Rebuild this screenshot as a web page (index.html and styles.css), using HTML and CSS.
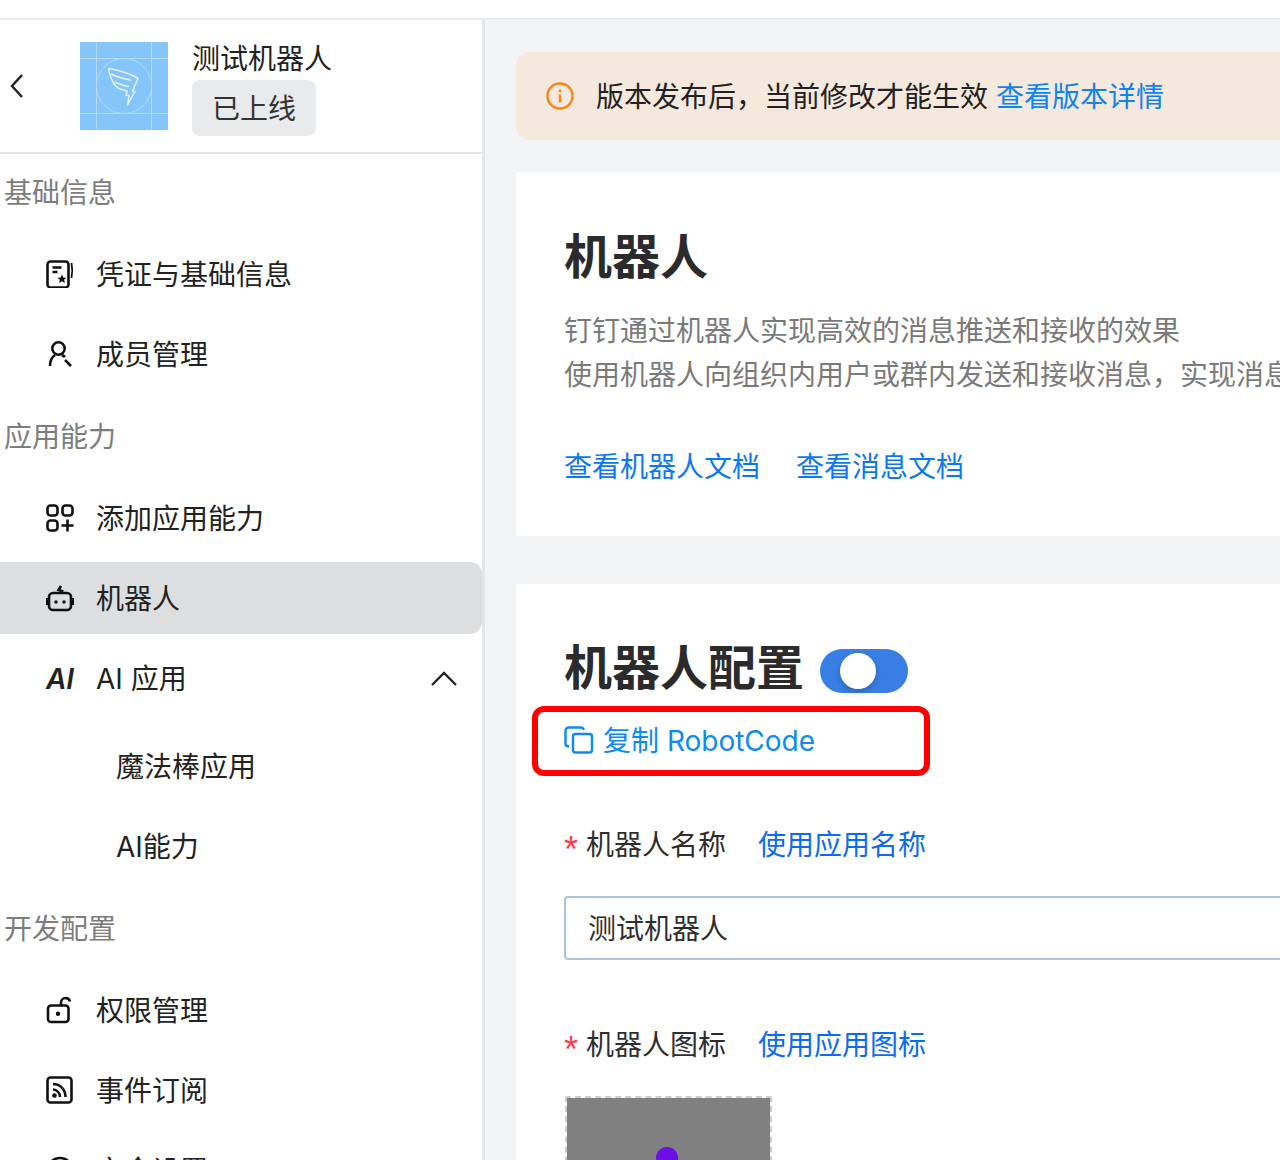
FILE: index.html
```html
<!DOCTYPE html>
<html lang="zh-CN">
<head>
<meta charset="utf-8">
<title>机器人</title>
<link rel="stylesheet" href="styles.css">
</head>
<body>
<div class="topbar"></div>
<div class="layout">
  <aside class="sidebar">
    <div class="app-head">
      <svg class="back" width="16" height="26" viewBox="0 0 16 26"><path d="M13 2 3 13l10 11" fill="none" stroke="#222" stroke-width="2.4"/></svg>
      <svg class="app-logo" width="88" height="88" viewBox="0 0 88 88">
        <rect width="88" height="88" fill="#86c5fa"/>
        <g fill="none" stroke="#b3dbfc" stroke-width="1">
          <path d="M16.500 0v88M71.500 0v88M0 16.500h88M0 71.500h88"/>
          <circle cx="44" cy="44" r="27.500"/>
        </g>
        <path d="M28.500 26.500c10 1.500 21 5 29.500 9.500l-5.500 13.500h2.500L47.500 63l1.500-9.500h-3l1-4.500c-7-1-13-5-15-11-2-3.500-3-7.500-3.500-11.500zM31 32c6 3 13 5 20 6M35 40c5 2.500 9 4 14 4.500" fill="none" stroke="#e3f2fe" stroke-width="1.500" stroke-linejoin="round"/>
      </svg>
      <div class="app-info">
        <div class="app-name">测试机器人</div>
        <div class="app-badge">已上线</div>
      </div>
    </div>

    <div class="group-title group-first">基础信息</div>
    <div class="nav-item">
      <svg class="nav-icon" viewBox="0 0 28 28" fill="none" stroke="#111" stroke-width="2.600"><rect x="1.500" y="1.500" width="21" height="26" rx="3"/><path d="M6.500 7.500h9M6.500 12h5"/><path d="M25.500 3c1 5 1 10 0 15" stroke-width="1.800"/><path d="m16 14.500 1.300 3 3.200.3-2.400 2 .8 3.200-2.900-1.700-2.900 1.700.8-3.200-2.400-2 3.200-.3z" fill="#111" stroke="none"/></svg>
      <span>凭证与基础信息</span>
    </div>
    <div class="nav-item">
      <svg class="nav-icon" viewBox="0 0 28 28" fill="none" stroke="#111" stroke-width="2.600"><circle cx="12.500" cy="8.500" r="6.200"/><path d="M4 26c0-5 2-9 5-11M16 15c1 .5 2 1 3 2M19 20l6 6"/></svg>
      <span>成员管理</span>
    </div>

    <div class="group-title">应用能力</div>
    <div class="nav-item">
      <svg class="nav-icon" viewBox="0 0 28 28" fill="none" stroke="#111" stroke-width="2.600"><rect x="1.500" y="1.500" width="10" height="10" rx="3"/><rect x="16.500" y="1.500" width="10" height="10" rx="3"/><rect x="1.500" y="16.500" width="10" height="10" rx="3"/><path d="M21.500 15.500v12M15.500 21.500h12"/></svg>
      <span>添加应用能力</span>
    </div>
    <div class="nav-item nav-active">
      <svg class="nav-icon" viewBox="0 0 28 28" fill="none" stroke="#111" stroke-width="2.600"><rect x="3" y="9" width="22" height="17" rx="4"/><path d="M1.200 14v7M26.800 14v7" stroke-width="2.800"/><path d="M15 2l-2.500 4 3.500 1-1 2"/><circle cx="10" cy="18" r="1.700" fill="#111" stroke="none"/><circle cx="18" cy="18" r="1.700" fill="#111" stroke="none"/></svg>
      <span>机器人</span>
    </div>
    <div class="nav-item nav-parent">
      <span class="nav-ai">AI</span>
      <span>AI 应用</span>
      <svg class="caret" width="28" height="16" viewBox="0 0 28 16"><path d="M2 15 14 3l12 12" fill="none" stroke="#222" stroke-width="2.400"/></svg>
    </div>
    <div class="nav-sub nav-sub-first">魔法棒应用</div>
    <div class="nav-sub">AI能力</div>

    <div class="group-title group-dev">开发配置</div>
    <div class="nav-item">
      <svg class="nav-icon" viewBox="0 0 28 28" fill="none" stroke="#111" stroke-width="2.600"><rect x="2" y="9.500" width="20.500" height="16.500" rx="3"/><path d="M15 9V6.500c0-2.500 2-4.500 4.500-4.500 2.300 0 4 1.500 4.500 3.500"/><circle cx="12" cy="17.800" r="2.200" fill="#111" stroke="none"/></svg>
      <span>权限管理</span>
    </div>
    <div class="nav-item">
      <svg class="nav-icon" viewBox="0 0 28 28" fill="none" stroke="#111" stroke-width="2.600"><rect x="1.500" y="1.500" width="24" height="25" rx="3"/><path d="M7 8c7 0 12.500 5.500 12.500 13M7 13.500c4 0 7 3.500 7 7.500"/><circle cx="8.500" cy="19.500" r="2.300" fill="#111" stroke="none"/></svg>
      <span>事件订阅</span>
    </div>
    <div class="nav-item">
      <svg class="nav-icon" viewBox="0 0 28 28" fill="none" stroke="#111" stroke-width="2.600"><circle cx="14" cy="14" r="12"/></svg>
      <span>安全设置</span>
    </div>
  </aside>

  <main class="main">
    <div class="notice">
      <svg class="notice-icon" width="28" height="28" viewBox="0 0 28 28" fill="none" stroke="#fb8418" stroke-width="2.400"><circle cx="14" cy="14" r="12.500"/><path d="M14 12.500v8"/><path d="M14 7.500v2.500"/></svg>
      <span class="notice-text">版本发布后，当前修改才能生效</span>
      <a class="link notice-link">查看版本详情</a>
    </div>

    <section class="card card-intro">
      <h1 class="card-title">机器人</h1>
      <p class="card-desc">钉钉通过机器人实现高效的消息推送和接收的效果<br>使用机器人向组织内用户或群内发送和接收消息，实现消息推送与智能交互的完整能力</p>
      <div class="doc-links">
        <a class="link">查看机器人文档</a>
        <a class="link">查看消息文档</a>
      </div>
    </section>

    <section class="card card-config">
      <div class="config-head">
        <h2 class="card-title">机器人配置</h2>
        <div class="switch"><div class="knob"></div></div>
      </div>
      <div class="copy-row">
        <svg width="30" height="28" viewBox="0 0 30 28" fill="none" stroke="#0d8bf5" stroke-width="2.400"><path d="M5 20.500c-2 0-3.500-1.200-3.500-3V4.500c0-1.800 1.500-3 3-3h12c1.800 0 3 1 3.200 2.500"/><rect x="9" y="8" width="19" height="18.500" rx="2.500"/></svg>
        <span>复制 RobotCode</span>
      </div>
      <div class="field-label field-first">
        <span class="req">*</span><span class="label-text">机器人名称</span><a class="link label-link">使用应用名称</a>
      </div>
      <div class="name-input">测试机器人</div>
      <div class="field-label field-second">
        <span class="req">*</span><span class="label-text">机器人图标</span><a class="link label-link">使用应用图标</a>
      </div>
      <div class="icon-box"><div class="icon-dot"></div></div>
    </section>
  </main>
</div>
</body>
</html>
```

FILE: styles.css
```css
*, *::after { box-sizing: border-box; }

html, body {
  margin: 0;
  height: 1160px;
  overflow: hidden;
}

body {
  background: #fff;
  color: #222;
  font-family: Inter, "Noto Sans CJK SC", sans-serif;
  font-size: 28px;
  line-height: 40px;
}

.topbar {
  height: 20px;
  background: #fff;
  border-bottom: 2px solid #e9eaec;
}

.layout {
  display: flex;
  height: 1140px;
}

.sidebar {
  flex: 0 0 485px;
  background: #fff;
  border-right: 3px solid #e4e5e7;
  overflow: hidden;
}

.app-head {
  display: flex;
  align-items: center;
  height: 134px;
  border-bottom: 2px solid #e4e5e7;
  padding-left: 9px;
}

.back { flex: none; margin-right: 55px; }
.app-logo { flex: none; margin-right: 24px; }

.app-info {
  display: flex;
  flex-direction: column;
  align-items: flex-start;
  padding-top: 6px;
}

.app-name {
  height: 38px;
  line-height: 34px;
}

.app-badge {
  width: 124px;
  height: 56px;
  line-height: 58px;
  text-align: center;
  background: #e9eaec;
  border-radius: 8px;
  color: #333;
}

.group-title {
  height: 40px;
  line-height: 42px;
  padding-left: 4px;
  color: #7d7d7d;
  margin-top: 26px;
}

.group-first { margin-top: 18px; }
.group-dev { margin-top: 42px; }

.nav-item {
  display: flex;
  align-items: center;
  height: 72px;
  padding-left: 46px;
  margin-top: 8px;
}

.nav-item span { padding-top: 2px; }

.group-title + .nav-item { margin-top: 26px; }

.nav-active {
  background: #dddee0;
  border-radius: 0 12px 12px 0;
}

.nav-icon {
  flex: none;
  width: 28px;
  height: 28px;
  margin-right: 22px;
}

.nav-ai {
  flex: none;
  width: 50px;
  font-style: italic;
  font-weight: 600;
  color: #222;
}

.nav-parent { padding-right: 24px; }
.caret { margin-left: auto; }

.nav-sub {
  height: 40px;
  line-height: 42px;
  padding-left: 116px;
  margin-top: 40px;
}

.nav-sub-first { margin-top: 32px; }

.main {
  flex: 1;
  min-width: 0;
  background: #f3f4f6;
  padding: 32px 0 0 31px;
  overflow: hidden;
}

.notice {
  display: flex;
  align-items: center;
  width: 900px;
  height: 88px;
  padding-left: 30px;
  background: #f5e8dd;
  border-radius: 14px;
  white-space: nowrap;
}

.notice-icon { flex: none; margin-right: 22px; }
.notice-text { margin-right: 8px; padding-top: 2px; }

.link {
  color: #0a78f0;
  white-space: nowrap;
}

.notice-link { color: #0d84f0; padding-top: 2px; }

.card {
  width: 900px;
  background: #fff;
  padding-left: 48px;
}

.card-intro {
  height: 364px;
  margin-top: 32px;
  padding-top: 53px;
}

.card-title {
  margin: 0;
  font-size: 48px;
  line-height: 64px;
  font-weight: 700;
  color: #2b2b2b;
}

.card-desc {
  margin: 20px 0 0;
  color: #7a7a7a;
  line-height: 44px;
  white-space: nowrap;
}

.doc-links {
  display: flex;
  gap: 36px;
  margin-top: 50px;
}

.card-config {
  height: 700px;
  margin-top: 48px;
  padding-top: 52px;
}

.config-head {
  display: flex;
  align-items: center;
  gap: 16px;
  height: 64px;
}

.switch {
  width: 88px;
  height: 44px;
  margin-top: 6px;
  padding: 4px 0 0 20px;
  background: #397ee4;
  border-radius: 22px;
}

.knob {
  width: 36px;
  height: 36px;
  background: #fff;
  border-radius: 50%;
  box-shadow: 0 3px 6px rgba(0, 0, 0, .2);
}

.copy-row {
  position: relative;
  display: flex;
  align-items: center;
  gap: 9px;
  height: 40px;
  margin-top: 20px;
  color: #0d8bf5;
}

.copy-row span { padding-top: 2px; }

.copy-row::after {
  content: "";
  position: absolute;
  left: -32px;
  top: -14px;
  width: 398px;
  height: 70px;
  border: 6px solid #f00;
  border-radius: 12px;
}

.field-label {
  display: flex;
  align-items: center;
  height: 40px;
  margin-top: 64px;
  padding-top: 2px;
}

.req {
  width: 22px;
  height: 30px;
  line-height: 40px;
  font-size: 36px;
  color: #ff3b4a;
  font-family: "Liberation Sans", sans-serif;
}

.label-text { width: 172px; color: #2e2e2e; }
.label-link { color: #0a6cf0; }

.name-input {
  width: 800px;
  height: 64px;
  margin-top: 32px;
  padding-left: 22px;
  line-height: 62px;
  border: 2px solid #a9c4de;
  border-radius: 4px;
  color: #2e2e2e;
}

.field-second { margin-top: 64px; }

.icon-box {
  width: 207px;
  height: 208px;
  margin: 32px 0 0 1px;
  background: #808080;
  background-clip: padding-box;
  border: 2px dashed #ccc;
  border-radius: 2px;
}

.icon-dot {
  width: 22px;
  height: 22px;
  margin: 49px 0 0 89px;
  background: #6a0fe6;
  border-radius: 50%;
}
```
